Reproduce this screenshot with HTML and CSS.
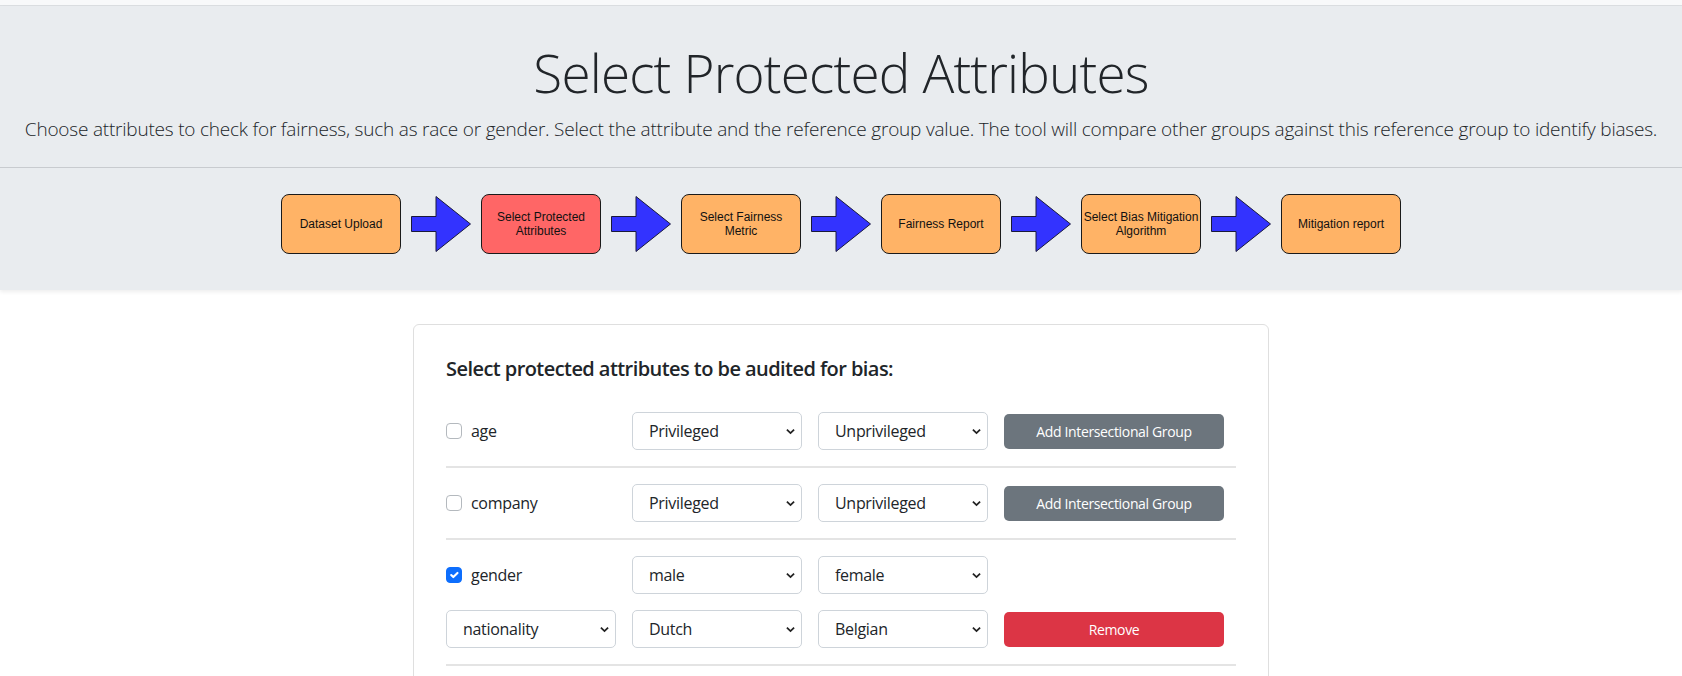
FILE: index.html
```html
<!DOCTYPE html>
<html lang="en">
<head>
<meta charset="utf-8">
<title>Select Protected Attributes</title>
<link rel="stylesheet" href="styles.css">
</head>
<body>
<div class="topbar"></div>
<header class="jumbo">
  <h1 class="title">Select Protected Attributes</h1>
  <p class="lead">Choose attributes to check for fairness, such as race or gender. Select the attribute and the reference group value. The tool will compare other groups against this reference group to identify biases.</p>
  <hr class="jumbo-hr">
  <nav class="flow">
    <div class="step">Dataset Upload</div>
    <svg class="arrow" viewBox="0 0 60 56" width="60" height="56"><polygon points="0.5,20.5 25,20.5 25,0.5 59.5,28 25,55.5 25,35.5 0.5,35.5"/></svg>
    <div class="step step-active">Select Protected Attributes</div>
    <svg class="arrow" viewBox="0 0 60 56" width="60" height="56"><polygon points="0.5,20.5 25,20.5 25,0.5 59.5,28 25,55.5 25,35.5 0.5,35.5"/></svg>
    <div class="step">Select Fairness Metric</div>
    <svg class="arrow" viewBox="0 0 60 56" width="60" height="56"><polygon points="0.5,20.5 25,20.5 25,0.5 59.5,28 25,55.5 25,35.5 0.5,35.5"/></svg>
    <div class="step">Fairness Report</div>
    <svg class="arrow" viewBox="0 0 60 56" width="60" height="56"><polygon points="0.5,20.5 25,20.5 25,0.5 59.5,28 25,55.5 25,35.5 0.5,35.5"/></svg>
    <div class="step">Select Bias Mitigation Algorithm</div>
    <svg class="arrow" viewBox="0 0 60 56" width="60" height="56"><polygon points="0.5,20.5 25,20.5 25,0.5 59.5,28 25,55.5 25,35.5 0.5,35.5"/></svg>
    <div class="step">Mitigation report</div>
  </nav>
</header>

<main class="container">
  <section class="card">
    <h5 class="card-title">Select protected attributes to be audited for bias:</h5>

    <div class="attr">
      <div class="attr-row">
        <label class="check"><input type="checkbox"><span>age</span></label>
        <select class="sel"><option>Privileged</option></select>
        <select class="sel"><option>Unprivileged</option></select>
        <button class="btn btn-secondary">Add Intersectional Group</button>
      </div>
    </div>

    <div class="attr">
      <div class="attr-row">
        <label class="check"><input type="checkbox"><span>company</span></label>
        <select class="sel"><option>Privileged</option></select>
        <select class="sel"><option>Unprivileged</option></select>
        <button class="btn btn-secondary">Add Intersectional Group</button>
      </div>
    </div>

    <div class="attr">
      <div class="attr-row">
        <label class="check"><input type="checkbox" checked><span>gender</span></label>
        <select class="sel"><option>male</option></select>
        <select class="sel"><option>female</option></select>
      </div>
      <div class="attr-row">
        <select class="sel"><option>nationality</option></select>
        <select class="sel"><option>Dutch</option></select>
        <select class="sel"><option>Belgian</option></select>
        <button class="btn btn-danger">Remove</button>
      </div>
    </div>
  </section>
</main>
</body>
</html>
```

FILE: styles.css
```css
* { box-sizing: border-box; }
html, body { margin: 0; padding: 0; }
body {
  font-family: "Open Sans", "Noto Sans", "Liberation Sans", sans-serif;
  color: #212529;
  background: #fff;
  font-size: 16px;
  letter-spacing: -0.3px;
}

.topbar {
  height: 6px;
  background: #f8f9fa;
  border-bottom: 1px solid #dcdfe2;
}

.jumbo {
  background: #e9ecef;
  padding: 33px 0 36px;
  text-align: center;
  box-shadow: 0 2px 4px rgba(0, 0, 0, 0.07);
}

.title {
  margin: 0;
  font-size: 53px;
  font-weight: 300;
  line-height: 67px;
  letter-spacing: -0.8px;
}

.lead {
  margin: 8px 0 0;
  font-size: 19px;
  font-weight: 300;
  line-height: 30px;
  letter-spacing: -0.21px;
  white-space: nowrap;
}

.jumbo-hr {
  margin: 23px 0 0;
  border: 0;
  border-top: 1px solid #c8cbcf;
}

.flow {
  margin-top: 26px;
  display: flex;
  justify-content: center;
  align-items: center;
  gap: 10px;
}

.step {
  width: 120px;
  height: 60px;
  display: flex;
  align-items: center;
  justify-content: center;
  text-align: center;
  padding: 0;
  background: #ffb366;
  border: 1px solid #1a1a1a;
  border-radius: 8px;
  font-family: "Liberation Sans", Arial, sans-serif;
  font-size: 12px;
  line-height: 14px;
  letter-spacing: 0;
  color: #111;
}
.step-active { background: #ff6666; }

.arrow { display: block; }
.arrow polygon { fill: #3333ff; stroke: #1a1a3a; stroke-width: 1; }

.container {
  width: 856px;
  margin: 34px auto 0;
}

.card {
  border: 1px solid #dfdfdf;
  border-radius: 6px;
  padding: 32px 32px 40px;
  background: #fff;
}

.card-title {
  margin: 0 0 31px;
  font-size: 20px;
  font-weight: 600;
  line-height: 24px;
  letter-spacing: -0.56px;
}

.attr {
  padding-bottom: 16px;
  border-bottom: 2px solid #e4e4e4;
  margin-bottom: 16px;
  display: flex;
  flex-direction: column;
  gap: 16px;
}

.attr-row {
  display: grid;
  grid-template-columns: 170px 170px 170px 220px;
  column-gap: 16px;
  align-items: center;
}

.check {
  display: flex;
  align-items: center;
  gap: 9px;
  font-size: 16px;
  line-height: 24px;
}
.check input {
  appearance: none;
  -webkit-appearance: none;
  margin: 0;
  width: 16px;
  height: 16px;
  border: 1px solid #b4b9be;
  border-radius: 4px;
  background: #fff;
}
.check input:checked {
  background: #0d6efd url("data:image/svg+xml,%3csvg xmlns='http://www.w3.org/2000/svg' viewBox='0 0 20 20'%3e%3cpath fill='none' stroke='%23fff' stroke-linecap='round' stroke-linejoin='round' stroke-width='3' d='m6 10 3 3 6-6'/%3e%3c/svg%3e") center / 100% no-repeat;
  border-color: #0d6efd;
}

.sel {
  appearance: none;
  -webkit-appearance: none;
  width: 170px;
  height: 38px;
  padding: 0 24px 0 16px;
  border: 1px solid #ced4da;
  border-radius: 5px;
  background: #fff url("data:image/svg+xml,%3csvg xmlns='http://www.w3.org/2000/svg' viewBox='0 0 10 7'%3e%3cpath fill='none' stroke='%23222' stroke-width='2' d='M1 1.5 5 5.3 9 1.5'/%3e%3c/svg%3e") right 6px center / 9px 7px no-repeat;
  font-family: inherit;
  font-size: 16px;
  letter-spacing: -0.3px;
  color: #212529;
}

.btn {
  height: 35px;
  width: 220px;
  border: 0;
  border-radius: 5px;
  color: #fff;
  font-family: inherit;
  font-size: 14px;
  letter-spacing: -0.35px;
}
.btn-secondary { background: #6c757d; }
.btn-danger { background: #dc3545; }
```
